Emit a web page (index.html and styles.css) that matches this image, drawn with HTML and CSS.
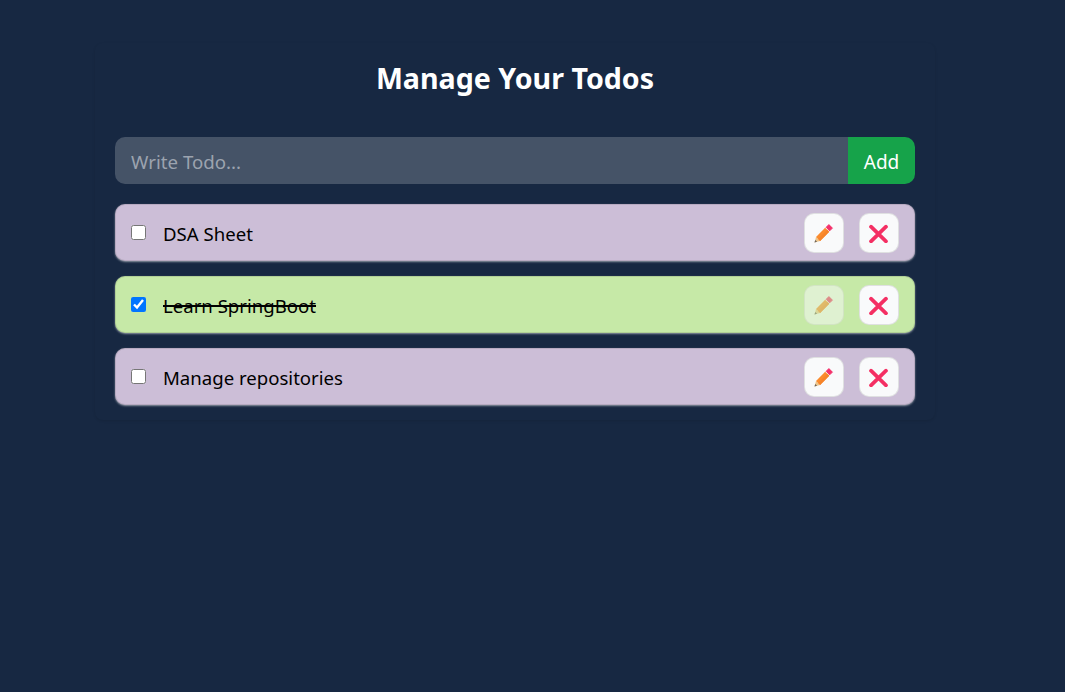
FILE: index.html
```html
<!DOCTYPE html>
<html lang="en">
<head>
    <meta charset="UTF-8">
    <meta name="viewport" content="width=device-width, initial-scale=1.0">
    <title>Manage Your Todos</title>
    <link rel="stylesheet" href="styles.css">
</head>
<body>
    <div class="container">
        <h1>Manage Your Todos</h1>

        <form class="todo-form">
            <input type="text" placeholder="Write Todo...">
            <button type="submit">Add</button>
        </form>

        <div class="todo-list">
            <div class="todo-item">
                <input type="checkbox">
                <span class="todo-text">DSA Sheet</span>
                <button class="icon-btn" type="button">
                    <svg viewBox="0 0 20 20" width="20" height="20"><use href="#pencil"></use></svg>
                </button>
                <button class="icon-btn" type="button">
                    <svg viewBox="0 0 20 20" width="20" height="20"><use href="#cross"></use></svg>
                </button>
            </div>

            <div class="todo-item done">
                <input type="checkbox" checked>
                <span class="todo-text">Learn SpringBoot</span>
                <button class="icon-btn" type="button" disabled>
                    <svg viewBox="0 0 20 20" width="20" height="20"><use href="#pencil"></use></svg>
                </button>
                <button class="icon-btn" type="button">
                    <svg viewBox="0 0 20 20" width="20" height="20"><use href="#cross"></use></svg>
                </button>
            </div>

            <div class="todo-item">
                <input type="checkbox">
                <span class="todo-text">Manage repositories</span>
                <button class="icon-btn" type="button">
                    <svg viewBox="0 0 20 20" width="20" height="20"><use href="#pencil"></use></svg>
                </button>
                <button class="icon-btn" type="button">
                    <svg viewBox="0 0 20 20" width="20" height="20"><use href="#cross"></use></svg>
                </button>
            </div>
        </div>
    </div>

    <svg class="icon-defs" aria-hidden="true">
        <symbol id="pencil" viewBox="0 0 20 20">
            <path d="M2 13.9 6.1 18 .5 19.5z" fill="#edc58a"/>
            <path d="M1.2 16.9 3.1 18.8 .5 19.5z" fill="#6b6660"/>
            <path d="M2 13.9 11.15 4.75 15.25 8.85 6.1 18z" fill="#fb8c2e"/>
            <path d="M4.05 15.95 13.2 6.8 15.25 8.85 6.1 18z" fill="#f6842a"/>
            <path d="M12.2 4.3 14.9 1.6 18.4 5.1 15.7 7.8z" fill="#f4306a" stroke="#f4306a" stroke-width="1" stroke-linejoin="round"/>
        </symbol>
        <symbol id="cross" viewBox="0 0 20 20">
            <path d="M2 3.7 17 18.3M17 3.7 2 18.3" fill="none" stroke="#f42f63" stroke-width="3.7" stroke-linecap="round"/>
        </symbol>
    </svg>
</body>
</html>
```

FILE: styles.css
```css
* {
    margin: 0;
    padding: 0;
    box-sizing: border-box;
    font-family: "Noto Sans", "Open Sans", sans-serif;
}

body {
    background: #172842;
    min-height: 692px;
    padding: 43px 130px 0 95px;
}

.container {
    width: 840px;
    padding: 15px 20px 15px;
    border-radius: 8px;
    color: white;
    box-shadow: 0 1px 3px rgba(0,0,0,0.1);
}

h1 {
    font-size: 28.6px;
    font-weight: 700;
    line-height: 40px;
    text-align: center;
    margin-bottom: 39px;
}

.todo-form {
    display: flex;
    height: 47px;
    margin-bottom: 20px;
}

.todo-form input {
    flex: 1;
    min-width: 0;
    padding: 2px 16px 0;
    border: none;
    outline: none;
    border-radius: 10px 0 0 10px;
    background: rgba(255,255,255,0.2);
    color: white;
    font-size: 18.7px;
}

.todo-form input::placeholder {
    color: #9ca3af;
}

.todo-form button {
    width: 67px;
    padding-top: 2px;
    border: none;
    border-radius: 0 10px 10px 0;
    background: #16a34a;
    color: white;
    font-size: 19px;
}

.todo-list {
    display: flex;
    flex-direction: column;
    gap: 15px;
}

.todo-item {
    display: flex;
    align-items: center;
    height: 57px;
    padding: 0 15px;
    border: 1px solid rgba(0,0,0,0.1);
    border-radius: 10px;
    background: #ccbed7;
    color: black;
    box-shadow: 0 1px 2px rgba(255,255,255,0.5);
}

.todo-item.done {
    background: #c6e9a7;
}

.todo-item input {
    width: 15px;
    height: 15px;
    flex-shrink: 0;
}

.todo-text {
    flex: 1;
    margin-left: 17px;
    padding-top: 2px;
    font-size: 18.6px;
}

.done .todo-text {
    text-decoration: line-through;
    text-decoration-thickness: 2px;
}

.icon-btn {
    display: flex;
    align-items: center;
    justify-content: center;
    width: 40px;
    height: 40px;
    margin-left: 15px;
    border: 1px solid rgba(0,0,0,0.1);
    border-radius: 10px;
    background: #f9fafb;
}

.icon-btn:disabled {
    opacity: 0.5;
}

.icon-defs {
    display: none;
}
```
